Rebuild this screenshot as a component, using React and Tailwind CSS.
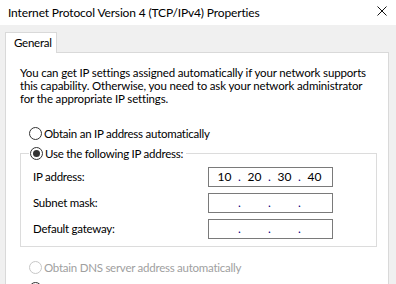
import React from "react";

function Radio({ checked, disabled }) {
  return (
    <span
      className={`relative inline-flex w-[13px] h-[13px] rounded-full border bg-white items-center justify-center shrink-0 ${
        disabled ? "border-[#c7c7c7]" : "border-[#333333]"
      }`}
    >
      {checked && <span className="w-[7px] h-[7px] rounded-full bg-[#333333]" />}
    </span>
  );
}

function IpField({ values }) {
  return (
    <div className="w-[125px] h-[20px] border border-[#7a7a7a] bg-white flex items-center pl-[2px] text-[12px] tracking-normal">
      {[0, 1, 2, 3].map((i) => (
        <React.Fragment key={i}>
          <span className="w-[27px] text-center">{values ? values[i] : ""}</span>
          {i < 3 && <span className="w-[3px] text-center text-[#000080]">.</span>}
        </React.Fragment>
      ))}
    </div>
  );
}

export default function App() {
  return (
    <div
      className="w-[396px] h-[284px] overflow-hidden flex flex-col bg-[#f0f0f0] text-[11.5px] tracking-[-0.25px] text-black"
      style={{ fontFamily: 'Lato, "Liberation Sans", Arial, sans-serif' }}
    >
      <div className="h-[25px] bg-white flex items-center justify-between pl-[8px] pr-[9px] shrink-0">
        <span className="text-[12px] tracking-[-0.15px]">Internet Protocol Version 4 (TCP/IPv4) Properties</span>
        <svg width="10" height="10" viewBox="0 0 10 10" className="mb-[3px]">
          <path d="M0.5 0.5L9.5 9.5M9.5 0.5L0.5 9.5" stroke="#111" strokeWidth="1" />
        </svg>
      </div>
      <div className="flex-1 flex flex-col pl-[5px] pr-[7px] pt-[7px]">
        <div className="flex">
          <div className="w-[52px] h-[21px] bg-white border border-b-0 border-[#d9d9d9] flex items-center pl-[8px] -mb-px relative z-10">
            General
          </div>
        </div>
        <div className="flex-1 bg-white border border-b-0 border-[#d9d9d9] pl-[14px] pr-[5px] pt-[13px]">
          <p className="leading-[13px] whitespace-nowrap tracking-[-0.15px]">
            You can get IP settings assigned automatically if your network supports
            <br />
            this capability. Otherwise, you need to ask your network administrator
            <br />
            for the appropriate IP settings.
          </p>
          <div className="flex items-center gap-[2px] ml-[9px] mt-[22px] h-[13px]">
            <Radio />
            <span>Obtain an IP address automatically</span>
          </div>
          <fieldset className="border border-[#dcdcdc] mt-[7px] mr-[6px] pl-[12px] pr-[43px] pb-[7px]">
            <legend className="-ml-[4px] px-[1px] flex items-center gap-[2px] h-[13px]">
              <Radio checked />
              <span className="pr-[2px]">Use the following IP address:</span>
            </legend>
            <div className="flex flex-col gap-[6px] mt-[7px]">
              <div className="flex items-center justify-between">
                <span>IP address:</span>
                <IpField values={["10", "20", "30", "40"]} />
              </div>
              <div className="flex items-center justify-between">
                <span>Subnet mask:</span>
                <IpField />
              </div>
              <div className="flex items-center justify-between">
                <span>Default gateway:</span>
                <IpField />
              </div>
            </div>
          </fieldset>
          <div className="flex items-center gap-[2px] ml-[9px] mt-[14px] h-[13px] text-[#a0a0a0]">
            <Radio disabled />
            <span>Obtain DNS server address automatically</span>
          </div>
          <div className="flex items-center gap-[2px] ml-[9px] mt-[8px] h-[13px]">
            <Radio />
            <span>Use the following DNS server addresses:</span>
          </div>
        </div>
      </div>
    </div>
  );
}
